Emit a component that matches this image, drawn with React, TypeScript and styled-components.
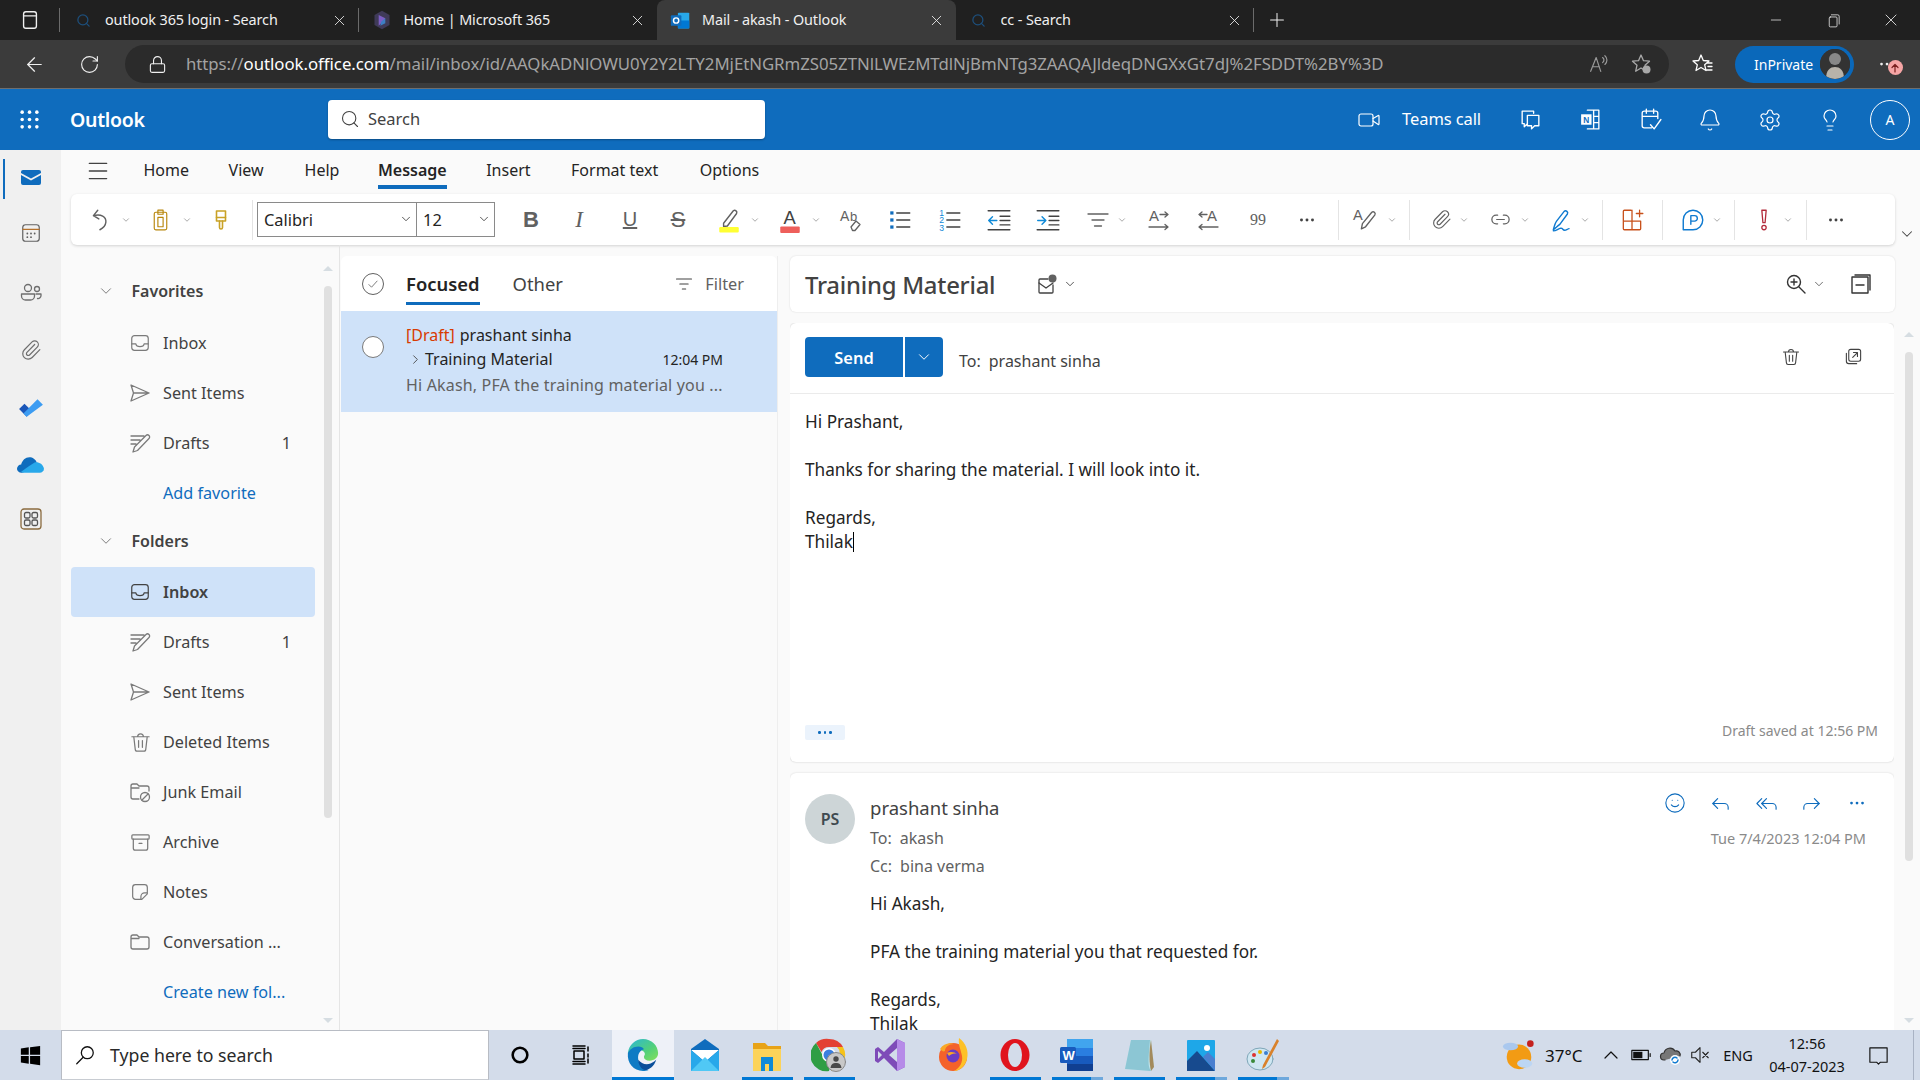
import React from "react";
import styled, { createGlobalStyle } from "styled-components";
import {
  ArrowLeft, Bell, ChevronDown, ChevronRight, ChevronUp, Forward, Lightbulb, Lock, Menu, Minus, Paperclip, Plus,
  Reply, ReplyAll, RotateCw, Search, Settings, Smile, Video, X,
} from "lucide-react";

const UI = `"Noto Sans", "Open Sans", sans-serif`;

const Global = createGlobalStyle`
  html, body { margin: 0; padding: 0; width: 1920px; height: 1080px; overflow: hidden; background: #fafafa; }
  body { font-family: ${UI}; color: #242424; }
  * { box-sizing: border-box; }
`;

const Page = styled.div`display:flex;flex-direction:column;width:1920px;height:1080px;overflow:hidden;`;
const IconSvg = styled.svg<{ $s?: number; $c?: string; $w?: number }>`
  width:${p => p.$s ?? 24}px;height:${p => p.$s ?? 24}px;flex:none;display:block;fill:none;
  stroke:${p => p.$c ?? "currentColor"};stroke-width:${p => p.$w ?? 1.3};stroke-linecap:round;stroke-linejoin:round;
`;
const Ico = ({ s, c, w, children }: { s?: number; c?: string; w?: number; children: React.ReactNode }) => (
  <IconSvg viewBox="0 0 24 24" $s={s} $c={c} $w={w}>{children}</IconSvg>
);

/* ---------- tab strip ---------- */
const TabStrip = styled.div`height:40px;background:#202020;display:flex;align-items:stretch;flex:none;color:#f0f0f0;`;
const SideToggle = styled.div`width:60px;display:flex;align-items:center;justify-content:center;position:relative;
  &::after{content:"";position:absolute;right:0;top:8px;bottom:8px;width:1px;background:#6b6b6b;}`;
const Tab = styled.div<{ $active?: boolean; $sep?: boolean }>`
  width:298.5px;display:flex;align-items:center;padding:0 11px 0 12px;position:relative;font-size:14.4px;letter-spacing:-.1px;
  ${p => p.$active ? "background:#3b3b3b;border-radius:8px 8px 0 0;" : ""}
  ${p => p.$sep ? `&::after{content:"";position:absolute;right:0;top:8px;bottom:8px;width:1px;background:#6b6b6b;}` : ""}
`;
const TabFav = styled.div`width:22px;margin-right:11px;flex:none;display:flex;justify-content:center;`;
const TabTitle = styled.div`flex:1;white-space:nowrap;overflow:hidden;padding-bottom:2px;`;
const NewTab = styled.div`width:46px;display:flex;align-items:center;justify-content:center;`;
const WindowControls = styled.div`margin-left:auto;display:flex;margin-right:0;`;
const WinBtn = styled.div`width:57.5px;display:flex;align-items:center;justify-content:center;`;

/* ---------- address bar ---------- */
const AddressBar = styled.div`height:49px;background:#3b3b3b;border-bottom:1px solid #6e6e6e;display:flex;align-items:center;flex:none;color:#f0f0f0;`;
const NavBtn = styled.div<{ $w: number }>`width:${p => p.$w}px;display:flex;align-items:center;justify-content:center;`;
const UrlPill = styled.div`margin-left:15px;width:1545px;height:38px;border-radius:19px;background:#2b2b2b;display:flex;align-items:center;padding:0 16px 0 23px;`;
const Url = styled.div`margin-left:19px;font-size:16.8px;letter-spacing:-.03px;color:#a3a3a3;white-space:nowrap;flex:1;padding-bottom:2px;overflow:hidden;`;
const UrlHost = styled.span`color:#fff;`;
const PillIcon = styled.div`margin-left:20px;display:flex;color:#a8a8a8;`;
const BarRight = styled.div`display:flex;align-items:center;`;
const FavSlot = styled.div`width:65px;display:flex;justify-content:center;margin-left:1px;`;
const InPrivate = styled.div`width:119px;height:37px;border-radius:19px;background:#0a68ba;display:flex;align-items:center;justify-content:space-between;padding:0 4px 0 19px;font-size:14px;color:#fff;`;
const ProfilePic = styled.div`width:30px;height:30px;border-radius:50%;background:#333;display:flex;align-items:center;justify-content:center;overflow:hidden;`;
const DotsWrap = styled.div`width:66px;display:flex;justify-content:center;position:relative;color:#f0f0f0;font-size:14px;`;
const UpdateBadge = styled.div`position:absolute;left:34px;top:7px;width:15px;height:15px;border-radius:50%;background:#f6a5a5;display:flex;align-items:center;justify-content:center;`;

/* ---------- header ---------- */
const Header = styled.div`height:61px;background:#0f6cbd;display:flex;align-items:center;flex:none;color:#fff;`;
const Waffle = styled.div`width:58px;display:flex;justify-content:center;`;
const Brand = styled.div`width:270px;padding-left:12px;padding-bottom:1px;font-size:19.5px;font-weight:600;letter-spacing:-.3px;`;
const SearchBox = styled.div`width:437px;height:39px;border-radius:4px;background:#fff;box-shadow:0 1px 2px rgba(0,0,0,.3);display:flex;align-items:center;padding:0 0 2px 12px;gap:8px;color:#424242;font-size:16.5px;`;
const HeaderRight = styled.div`margin-left:auto;display:flex;align-items:center;padding-right:10px;`;
const TeamsText = styled.div`margin:0 19px 2px 21px;font-size:16.5px;letter-spacing:-.1px;`;
const HeadSlot = styled.div`width:60px;display:flex;justify-content:center;`;
const MeCircle = styled.div`margin-left:10px;width:40px;height:40px;border-radius:50%;border:1px solid #fff;display:flex;align-items:center;justify-content:center;font-size:14px;`;

/* ---------- body ---------- */
const Body = styled.div`flex:1;display:flex;min-height:0;`;
const Rail = styled.div`width:61px;background:#f0f0f0;display:flex;flex-direction:column;flex:none;`;
const RailSlot = styled.div<{ $h: number; $active?: boolean }>`height:${p => p.$h}px;display:flex;align-items:center;justify-content:center;position:relative;
  ${p => p.$active ? `&::before{content:"";position:absolute;left:3px;top:9px;height:40px;width:2px;background:#0f6cbd;}` : ""}`;
const Main = styled.div`flex:1;display:flex;flex-direction:column;min-width:0;`;
const RibbonTabs = styled.div`height:44px;display:flex;align-items:flex-start;flex:none;`;
const Hamburger = styled.div`width:74px;padding-left:24px;height:42px;display:flex;align-items:center;color:#424242;`;
const RibbonTab = styled.div<{ $active?: boolean; $gap: number }>`
  margin-left:${p => p.$gap}px;height:42px;display:flex;align-items:center;font-size:16px;position:relative;padding-bottom:3px;
  ${p => p.$active ? `font-weight:600;&::after{content:"";position:absolute;left:0;right:0;top:35px;height:4px;background:#0f6cbd;}` : ""}
`;
const ToolCard = styled.div`height:51px;margin-left:10px;width:1824px;background:#fff;border-radius:6px;box-shadow:0 1px 3px rgba(0,0,0,.16);display:flex;align-items:center;flex:none;`;
const RibbonWrap = styled.div`display:flex;flex:none;`;
const Collapse = styled.div`margin-left:3px;width:22px;display:flex;align-items:flex-end;padding-bottom:2px;color:#424242;`;
const Tool = styled.div<{ $gap: number }>`margin-left:${p => p.$gap}px;width:24px;height:24px;flex:none;display:flex;align-items:center;justify-content:center;color:#616161;`;
const Caret = styled.div<{ $gap: number }>`margin-left:${p => p.$gap}px;width:10px;flex:none;display:flex;justify-content:center;color:#616161;`;
const Sep = styled.div<{ $gap: number }>`margin-left:${p => p.$gap}px;width:1px;height:40px;background:#e4e4e4;flex:none;`;
const Combo = styled.div<{ $w: number; $gap?: number }>`margin-left:${p => p.$gap ?? 0}px;width:${p => p.$w}px;height:35px;border:1px solid #8a8a8a;display:flex;align-items:center;justify-content:space-between;padding:0 3px 1px 6px;font-size:16.4px;color:#242424;flex:none;`;
const BoldGlyph = styled.span`font:700 22px "Liberation Sans",sans-serif;color:#616161;`;
const ItalicGlyph = styled.span`font:italic 400 23px "Liberation Serif",serif;color:#616161;`;
const UnderGlyph = styled.span`font:400 20px "Liberation Sans",sans-serif;color:#616161;text-decoration:underline;`;
const StrikeGlyph = styled.span`font:400 22px "Liberation Sans",sans-serif;color:#616161;text-decoration:line-through;`;

const Content = styled.div`flex:1;display:flex;padding-top:11px;min-height:0;`;
const FolderPane = styled.div`width:279px;flex:none;display:flex;border-right:1px solid #e5e5e5;margin-top:-11px;padding-top:11px;`;
const FolderList = styled.div`width:263px;flex:none;padding:13px 0 0 10px;overflow:hidden;`;
const Scroll = styled.div<{ $top: number }>`
  width:8px;flex:none;display:flex;flex-direction:column;align-items:center;padding-top:${p => p.$top}px;position:relative;
  &::before{content:"";flex:none;width:0;height:0;border:5px solid transparent;border-top:0;border-bottom:5px solid #d6dde2;margin-bottom:15.5px;}
  &::after{content:"";position:absolute;bottom:7px;width:0;height:0;border:5px solid transparent;border-bottom:0;border-top:5px solid #d6dde2;}
`;
const Thumb = styled.div<{ $h: number }>`width:8px;height:${p => p.$h}px;border-radius:4px;background:#e0e0e0;flex:none;`;
const Heading = styled.div<{ $first?: boolean }>`height:44px;margin:${p => p.$first ? "0 0 5px" : "1px 0 4px"};display:flex;align-items:center;font-size:16px;font-weight:600;color:#424242;padding-left:25.5px;gap:17px;`;
const Row = styled.div<{ $sel?: boolean; $link?: boolean }>`
  width:244px;height:50px;display:flex;align-items:center;padding:0 24px 0 58px;gap:12px;font-size:16.2px;color:${p => p.$link ? "#0f6cbd" : "#424242"};
  ${p => p.$sel ? "background:#cfe2f9;border-radius:4px;font-weight:600;" : ""}
`;
const RowIcon = styled.div`width:22px;flex:none;color:#7a7a7a;display:flex;justify-content:center;`;
const SelIcon = styled(RowIcon)`color:#424242;`;
const RowText = styled.div<{ $indent?: boolean }>`${p => p.$indent ? "margin-left:34px;" : ""}white-space:nowrap;flex:1;`;
const Count = styled.div`font-weight:400;`;

const ListPane = styled.div`width:437px;flex:none;margin-left:1px;background:#fafafa;border-right:1px solid #eee;`;
const ListHead = styled.div`height:55px;background:#fff;border-radius:6px 6px 0 0;display:flex;align-items:center;position:relative;padding-left:21px;`;
const CheckCircle = styled.div`width:22px;height:22px;border-radius:50%;border:1px solid #616161;display:flex;align-items:center;justify-content:center;color:#616161;`;
const Pivot = styled.div<{ $active?: boolean; $gap: number }>`
  margin-left:${p => p.$gap}px;height:49px;padding-top:6px;display:flex;align-items:center;font-size:18.4px;align-self:flex-start;position:relative;
  ${p => p.$active ? `font-weight:600;color:#242424;&::after{content:"";position:absolute;left:0;right:0;top:46px;height:3px;background:#0f6cbd;}` : "color:#424242;"}
`;
const FilterBtn = styled.div`margin-left:auto;padding-right:33px;display:flex;align-items:center;gap:11px;font-size:16.3px;color:#616161;`;
const MailItem = styled.div`height:101px;background:#cfe2f9;display:flex;`;
const RadioCol = styled.div`width:65px;flex:none;padding:25px 0 0 21px;`;
const Radio = styled.div`width:22px;height:22px;border-radius:50%;border:1.5px solid #7a7a7a;background:#fff;`;
const ItemText = styled.div`width:317px;padding-top:12px;font-size:16px;`;
const ItemLine = styled.div<{ $sub?: boolean }>`height:24px;display:flex;align-items:center;white-space:nowrap;${p => p.$sub ? "margin-top:2px;color:#616161;letter-spacing:.17px;" : ""}`;
const DraftTag = styled.span`color:#d83b01;margin-right:5px;`;
const Expander = styled.span`width:19px;display:flex;justify-content:center;color:#424242;`;
const ItemTime = styled.span`margin-left:auto;font-size:14px;`;

const Reading = styled.div`flex:1;margin-left:12px;min-width:0;display:flex;flex-direction:column;min-height:0;`;
const SubjectCard = styled.div`height:56px;width:1105px;flex:none;background:#fff;border-radius:6px;box-shadow:0 0 2px rgba(0,0,0,.14);display:flex;align-items:center;padding-left:15px;`;
const Subject = styled.div`font-size:23.9px;font-weight:500;color:#424242;letter-spacing:-.25px;padding-top:1px;`;
const SubjectTools = styled.div`margin-left:auto;display:flex;align-items:center;padding-right:22px;gap:0;color:#424242;`;
const Gapped = styled.div<{ $l?: number; $r?: number }>`margin-left:${p => p.$l ?? 0}px;margin-right:${p => p.$r ?? 0}px;display:flex;align-items:center;`;
const ReadArea = styled.div`flex:1;margin-top:11px;display:flex;min-height:0;`;
const CardsCol = styled.div`width:1104px;flex:none;display:flex;flex-direction:column;gap:11px;overflow:hidden;`;
const ScrollGap = styled.div`margin-left:11px;display:flex;align-items:stretch;`;
const ComposeCard = styled.div`height:439px;flex:none;background:#fff;border-radius:6px;box-shadow:0 0 2px rgba(0,0,0,.22);display:flex;flex-direction:column;`;
const ComposeBar = styled.div`height:71px;flex:none;border-bottom:1px solid #ebebeb;display:flex;align-items:center;padding:0 9px 2px 15px;font-size:16px;color:#424242;`;
const SendBtn = styled.div`width:98px;height:40px;background:#0f6cbd;color:#fff;border-radius:4px 0 0 4px;display:flex;align-items:center;justify-content:center;font-size:16.4px;font-weight:600;`;
const SendDrop = styled.div`margin-left:2px;width:38px;height:40px;background:#0f6cbd;color:#fff;border-radius:0 4px 4px 0;display:flex;align-items:center;justify-content:center;`;
const ToLabel = styled.div`margin-left:16px;margin-top:8px;display:flex;gap:8px;`;
const BarIcons = styled.div`margin-left:auto;display:flex;color:#424242;`;
const BarIcon = styled.div`width:63px;display:flex;justify-content:center;`;
const ComposeBody = styled.div`flex:1;padding:16px 15px 0;font-size:17.2px;line-height:24px;color:#242424;`;
const Caretline = styled.span`display:inline-block;width:1px;height:20px;background:#000;vertical-align:-4px;`;
const ComposeFoot = styled.div`display:flex;align-items:center;justify-content:space-between;padding:0 16px 22px 15px;height:37px;flex:none;`;
const MoreChip = styled.div`width:40px;height:15px;border-radius:2px;background:#ebf3fc;color:#0f6cbd;display:flex;align-items:center;justify-content:center;gap:3px;`;
const Dot = styled.i`width:2.5px;height:2.5px;border-radius:50%;background:#0f6cbd;display:block;`;
const SavedAt = styled.div`font-size:14px;line-height:15px;color:#8a8a8a;margin-bottom:5px;`;
const MsgCard = styled.div`flex:1;background:#fff;border-radius:6px 6px 0 0;box-shadow:0 0 2px rgba(0,0,0,.16);padding:21px 14px 0 15px;`;
const MsgHead = styled.div`display:flex;`;
const Avatar = styled.div`width:50px;height:50px;border-radius:50%;background:#cdd5d7;color:#3f4a50;display:flex;align-items:center;justify-content:center;font-size:16px;font-weight:600;flex:none;`;
const Who = styled.div`margin-left:15px;display:flex;flex-direction:column;`;
const WhoName = styled.div`margin-top:2px;height:24px;line-height:24px;font-size:18.5px;color:#424242;`;
const WhoLine = styled.div<{ $first?: boolean }>`height:28px;line-height:28px;font-size:16px;color:#616161;display:flex;gap:8px;${p => p.$first ? "margin-top:4px;" : ""}`;
const WhoRight = styled.div`margin-left:auto;margin-top:-5px;display:flex;flex-direction:column;align-items:flex-end;`;
const Actions = styled.div`display:flex;height:28px;color:#0f6cbd;align-items:center;`;
const ActionBtn = styled.div`width:45.5px;display:flex;justify-content:center;`;
const MsgDate = styled.div`margin:9px 14px 0 0;font-size:14.5px;line-height:24px;color:#8a8a8a;`;
const MsgBody = styled.div`margin:12px 0 0 65px;font-size:17.2px;line-height:24.1px;color:#242424;`;

/* ---------- taskbar ---------- */
const Taskbar = styled.div`height:50px;background:#d3dcea;display:flex;align-items:center;flex:none;`;
const StartBtn = styled.div`width:61px;display:flex;justify-content:center;`;
const TaskSearch = styled.div`width:428px;height:50px;background:#fff;border:1px solid #b8bcc4;border-bottom:1px solid #c8ccd2;display:flex;align-items:center;padding-left:12px;gap:14px;font-size:17.7px;color:#2a2a2a;`;
const TaskSlot = styled.div<{ $w?: number; $on?: boolean; $run?: boolean; $multi?: boolean }>`
  width:${p => p.$w ?? 62}px;height:50px;display:flex;align-items:center;justify-content:center;position:relative;flex:none;
  ${p => p.$on ? "background:#eef1f8;" : ""}
  ${p => p.$run ? `&::after{content:"";position:absolute;bottom:0;height:3px;left:${p.$on ? 0 : 6}px;right:${p.$on ? 0 : 5}px;
     background:${p.$multi ? "linear-gradient(90deg,#0078d4 0 76%,#6ea8dc 76%)" : "#0078d4"};}` : ""}
`;
const Tray = styled.div`margin-left:auto;display:flex;align-items:center;padding-right:6px;height:50px;color:#111;`;
const TraySlot = styled.div<{ $w: number; $l?: number }>`width:${p => p.$w}px;margin-left:${p => p.$l ?? 0}px;display:flex;justify-content:center;align-items:center;flex:none;`;
const Temp = styled.div`font-size:17px;margin-left:6px;width:51px;`;
const Eng = styled.div`font-size:14.5px;`;
const Clock = styled.div`font-size:14.5px;line-height:23px;text-align:center;`;
const ShowDesk = styled.div`width:1px;height:50px;background:#a9b3c4;margin-left:9px;`;

/* ---------- drawings ---------- */
const ThinClose = ({ s = 17 }: { s?: number }) => <X size={s} strokeWidth={1.2} />;
const TabSearchIco = () => <Search size={15} color="#1d4f7c" strokeWidth={2} />;
const Office = () => (
  <IconSvg viewBox="0 0 24 24" $s={20} $w={0}>
    <path d="M12 1 L21 6 V18 L12 23 L3 18 V6Z" fill="#3f3a58" />
    <path d="M8 6 L16 10 L11 16 L8 19Z" fill="#7d5fc5" />
    <path d="M16 10 V16 L10 19 L11 14Z" fill="#3d7fc4" />
  </IconSvg>
);
const OutlookIco = () => (
  <IconSvg viewBox="0 0 24 24" $s={21} $w={0}>
    <rect x="9" y="3" width="13" height="18" rx="1" fill="#28a8ea" />
    <rect x="9" y="12" width="13" height="9" fill="#0078d4" />
    <rect x="1" y="6" width="12" height="12" rx="1" fill="#0f6cbd" />
    <circle cx="7" cy="12" r="3" fill="none" stroke="#fff" strokeWidth="1.7" />
  </IconSvg>
);
const InboxI = ({ c }: { c?: string }) => <Ico s={22} c={c}><rect x="3" y="4" width="18" height="16" rx="3" /><path d="M3 13h4.500c.3 2 2 3 4.500 3s4.200-1 4.500-3H21" /></Ico>;
const SentI = () => <Ico s={24}><path d="M3 4l18 8-18 8 2.500-8zM5.500 12H21" /></Ico>;
const DraftI = () => <Ico s={24}><path d="M3 5h13M3 9h9M3 13h5M5 21l1.500-5L18 4.500a2.100 2.100 0 013 3L9.500 19.500z" /></Ico>;
const TrashI = ({ s = 23 }: { s?: number }) => <Ico s={s}><path d="M3 6h18M9 6a3 3 0 016 0M5 6l1.500 13a2 2 0 002 2h7a2 2 0 002-2L19 6M10 10v7M14 10v7" /></Ico>;
const JunkI = () => <Ico s={24}><path d="M11 19H5a2 2 0 01-2-2V6a2 2 0 012-2h4l2 2h8a2 2 0 012 2v3M3 8h8" /><circle cx="17" cy="17" r="4.500" /><path d="M14 20l6-6" /></Ico>;
const ArchiveI = () => <Ico s={23}><rect x="3" y="4" width="18" height="4.500" rx="1" /><path d="M4.500 8.500V18a2 2 0 002 2h11a2 2 0 002-2V8.500M10.500 13h3" /></Ico>;
const NoteI = () => <Ico s={22}><path d="M14 20H7a3 3 0 01-3-3V7a3 3 0 013-3h10a3 3 0 013 3v7zM20 13h-3a4 4 0 00-4 4v3" /></Ico>;
const FolderI = () => <Ico s={24}><path d="M3 7a2 2 0 012-2h4l2 2h8a2 2 0 012 2v8a2 2 0 01-2 2H5a2 2 0 01-2-2zM3 8.500h8" /></Ico>;
const DownC = ({ s = 14, c }: { s?: number; c?: string }) => <ChevronDown size={s} strokeWidth={1.3} color={c} />;

const Mono = `"Liberation Sans",sans-serif`;
const T = styled.text<{ $f?: number; $b?: boolean; $serif?: boolean }>`font-family:${p => p.$serif ? `"Liberation Serif",serif` : Mono};font-size:${p => p.$f ?? 10}px;stroke:none;font-weight:${p => p.$b ? 700 : 400};`;

const RT = {
  undo: <Ico s={26}><path d="M9 3L5 8l5 3M5 8c7-2 12 1 11.500 6-.3 3-2.500 5.500-5.500 7" /></Ico>,
  paste: <Ico s={25} c="#b8860b" w={1.1}><rect x="6" y="5" width="12" height="17" rx="1.500" /><rect x="9.500" y="3" width="5" height="4" /><rect x="9.500" y="10" width="5" height="9" /></Ico>,
  brush: <Ico s={24} c="#c9a227" w={1.6}><rect x="7.500" y="3" width="9" height="10" /><path d="M7.500 9.500h9M10.500 13v6.500a1.500 1.500 0 003 0V13" /></Ico>,
  highlight: <IconSvg viewBox="0 0 24 24" $s={26}><path d="M7 15L16 3.500a2 2 0 013 2.500L10.500 17.500 7 18z" stroke="#616161" /><rect x="3" y="18.500" width="18" height="5" rx="1" fill="#ffff33" stroke="none" /></IconSvg>,
  color: <IconSvg viewBox="0 0 24 24" $s={26}><T x="6" y="15.500" $f={17} fill="#424242">A</T><rect x="3" y="18" width="18" height="6" rx="1" fill="#ee5f5b" stroke="none" /></IconSvg>,
  clear: <IconSvg viewBox="0 0 24 24" $s={24}><T x="1" y="13" $f={14} fill="#616161">A</T><T x="11" y="13" $f={13} fill="#616161">b</T><path d="M12 19l5-6 4 3.500-5 6h-2.500z" stroke="#616161" /></IconSvg>,
  bullets: <Ico s={26} c="#424242"><path d="M9 5.500h12M9 12h12M9 18.500h12" /><rect x="3" y="4" width="3" height="3" fill="#0f6cbd" stroke="none" /><rect x="3" y="10.500" width="3" height="3" fill="#0f6cbd" stroke="none" /><rect x="3" y="17" width="3" height="3" fill="#0f6cbd" stroke="none" /></Ico>,
  numbers: <IconSvg viewBox="0 0 24 24" $s={26} $c="#424242"><path d="M10 5.500h12M10 12h12M10 18.500h12" /><T x="3" y="8" $f={8} fill="#0f8ad8">1</T><T x="3" y="15" $f={8} fill="#0f8ad8">2</T><T x="3" y="22" $f={8} fill="#0f8ad8">3</T></IconSvg>,
  outdent: <IconSvg viewBox="0 0 24 24" $s={26} $c="#424242"><path d="M2 3.500h20M13 8.500h9M13 12.500h9M13 16.500h9M2 21h20" /><path d="M10 12.500H2.500M6 9l-3.500 3.500L6 16" stroke="#0f8ad8" /></IconSvg>,
  indent: <IconSvg viewBox="0 0 24 24" $s={26} $c="#424242"><path d="M2 3.500h20M13 8.500h9M13 12.500h9M13 16.500h9M2 21h20" /><path d="M2.500 12.500H10M6.500 9l3.500 3.500L6.500 16" stroke="#0f8ad8" /></IconSvg>,
  align: <Ico s={24}><path d="M2 6h20M6 12h12M8.500 18h7" /></Ico>,
  ltr: <IconSvg viewBox="0 0 24 24" $s={24} $c="#616161"><T x="2" y="13" $f={15} fill="#616161">A</T><path d="M13 6.500h8M18 4l3 2.500L18 9M2 19h19M18 16.500l3 2.500-3 2.500" /></IconSvg>,
  rtl: <IconSvg viewBox="0 0 24 24" $s={24} $c="#616161"><T x="11" y="13" $f={15} fill="#616161">A</T><path d="M11 6.500H3M6 4L3 6.500 6 9M3 19h19M6 16.500L3 19l3 2.500" /></IconSvg>,
  quote: <IconSvg viewBox="0 0 24 24" $s={24}><T x="4" y="17" $f={16} $serif fill="#616161">99</T></IconSvg>,
  dots: <IconSvg viewBox="0 0 24 24" $s={22} $w={0}><circle cx="6" cy="12" r="1.600" fill="#424242" /><circle cx="12" cy="12" r="1.600" fill="#424242" /><circle cx="18" cy="12" r="1.600" fill="#424242" /></IconSvg>,
  styles: <IconSvg viewBox="0 0 24 24" $s={25} $c="#616161"><T x="1" y="12" $f={14} fill="#616161">A</T><path d="M9 21l1-5L19 5a2 2 0 013 2.500L13 19z" /></IconSvg>,
  attach: <Paperclip size={21} strokeWidth={1.3} color="#616161" />,
  link: <Ico s={23}><path d="M9 7.500H7.500a4.500 4.500 0 000 9H9M15 7.500h1.500a4.500 4.500 0 010 9H15M8 12h8" /></Ico>,
  sign: <Ico s={26} c="#0f7ad0"><path d="M4 21c1-4 1.500-6 3-8l7-9a2 2 0 013 2.500l-7 9.500c-2 1.500-4 3.500-6 5zM4 22c3 0 4-2 7-2.500 2 0 1.500 2 3.500 2 1.500 0 2-1 4-1.500" /></Ico>,
  table: <Ico s={26} c="#c8501a" w={1.2}><path d="M11 3H5a1 1 0 00-1 1v16a1 1 0 001 1h14a1 1 0 001-1v-7H4M12 3v18M16 6h6M19 3v6" /></Ico>,
  poll: <IconSvg viewBox="0 0 24 24" $s={26} $c="#0f7ad0"><path d="M3 21v-9a9 9 0 119 9z" /><path d="M10 16V8h3.500a2.500 2.500 0 010 5H10" /></IconSvg>,
  important: <Ico s={26} c="#b22a3a" w={1.2}><path d="M10 3h4l-1 11.500h-2z" /><circle cx="12" cy="19" r="2" /></Ico>,
};

const Caretd = ({ g }: { g: number }) => <Caret $gap={g}><DownC /></Caret>;

const CardIcon = () => <Ico s={24} c="#424242"><path d="M13 7H5a1 1 0 00-1 1v12a1 1 0 001 1h12a1 1 0 001-1v-7" /><path d="M4 11l7 5 7-5" /><circle cx="17.500" cy="6.500" r="4" fill="#616161" stroke="none" /></Ico>;

/* taskbar art */
const App16 = ({ children, s = 36 }: { children: React.ReactNode; s?: number }) => <IconSvg viewBox="0 0 36 36" $s={s} $w={0}>{children}</IconSvg>;
const TbEdge = () => (
  <App16 s={34}>
    <defs><linearGradient id="eg" x1="0" y1="0" x2="1" y2="1"><stop offset="0" stopColor="#2bb6d8" /><stop offset=".6" stopColor="#52d07a" /><stop offset="1" stopColor="#86e05a" /></linearGradient></defs>
    <path d="M2 16C3 7 10 1 18 1c9 0 16 7 16 15 0 5-4 8-9 8-4 0-6-2-6-4 0-1 1-2 1-3 0-3-4-5-8-4-5 1-8 3-10 3z" fill="url(#eg)" />
    <path d="M2 16c2-4 6-7 11-7 3 0 5 1 6 3-4 1-7 5-6 11 1 5 5 10 11 11-2 1-4 1-6 1C8 35 1 27 2 16z" fill="#0f7bc4" />
    <path d="M13 23c3 4 8 6 13 4 2-1 4-2 6-4-2 7-8 11-12 11-4-1-7-6-7-11z" fill="#0a4f9a" />
  </App16>
);
const TbMail = () => (
  <App16><path d="M4 12L18 2l14 10v22H4z" fill="#0f6cbd" /><path d="M4 13h28L18 25z" fill="#fff" /><path d="M4 13v21h28V13L18 25z" fill="#28a8ea" /><path d="M4 34l14-14 14 14z" fill="#50c8f5" /></App16>
);
const TbFolder = () => (
  <App16><path d="M4 6h12l3 3h13v6H4z" fill="#e8a317" /><path d="M4 12h28v22H4z" fill="#fcd35a" /><rect x="12" y="20" width="12" height="14" fill="#0f8ad8" /><rect x="16" y="27" width="4" height="7" fill="#fcd35a" /></App16>
);
const TbChrome = () => (
  <App16>
    <path d="M18 2a16 16 0 0114 8H18a8 8 0 00-7.500 5L5 6a16 16 0 0113-4z" fill="#e34133" />
    <path d="M32 10a16 16 0 01-12 24l6-12a8 8 0 000-12z" fill="#f6c218" />
    <path d="M5 6l7 13a8 8 0 008 7l-2 8A16 16 0 015 6z" fill="#2f9e44" />
    <circle cx="18" cy="18" r="7" fill="#fff" /><circle cx="18" cy="18" r="5.500" fill="#3a7fe0" />
    <circle cx="25" cy="25" r="9.500" fill="#c8c8c8" stroke="#888" strokeWidth="1" /><circle cx="25" cy="22" r="2.700" fill="#4a4a4a" /><path d="M19.500 31c.5-4 2.500-5 5.500-5s5 1 5.500 5z" fill="#4a4a4a" />
  </App16>
);
const TbVS = () => (
  <App16>
    <path d="M24 2l8 4v24l-8 4-13-13-6 5-3-2V12l3-2 6 5z" fill="#7e4bb8" />
    <path d="M24 2l8 4v24l-8 4z" fill="#b68be8" />
    <path d="M24 11l-8 7 8 7zM5 14v8l4-4z" fill="#d3dcea" />
  </App16>
);
const TbFirefox = () => (
  <App16>
    <circle cx="18" cy="20" r="14" fill="#f4622a" />
    <path d="M24 1c7 5 10 13 8 21-2 8-8 12-13 12 6-3 9-9 8-15-1-6-4-11-3-18z" fill="#fdc127" />
    <path d="M5 12c3-5 9-7 14-5-5 0-9 3-9 7-2 1-3 0-5-2z" fill="#f9a825" />
    <circle cx="18" cy="19" r="6.500" fill="#6a3cc4" /><path d="M12 16c3-2 8-1 10 1-3-1-6 0-8 2z" fill="#f9a825" />
  </App16>
);
const TbOpera = () => (
  <App16><ellipse cx="18" cy="18" rx="14.500" ry="16" fill="#e0141d" /><ellipse cx="18" cy="18" rx="7" ry="12" fill="#d3dcea" /></App16>
);
const TbWord = () => (
  <App16>
    <rect x="8" y="2" width="26" height="32" rx="1.500" fill="#2a7ee0" /><rect x="8" y="2" width="26" height="9" fill="#41a5ee" /><rect x="8" y="19" width="26" height="8" fill="#185abd" /><rect x="8" y="27" width="26" height="7" fill="#103f91" />
    <rect x="1" y="10" width="16" height="16" rx="1.500" fill="#185abd" /><T x="3.500" y="23" $f={13} $b fill="#fff">W</T>
  </App16>
);
const TbNote = () => (
  <App16><path d="M10 3h20l3 27-3 4-26-2z" fill="#bfe3ea" /><path d="M10 3L4 32l26 2c-3-5-3-8-1-31z" fill="#8cc6d4" /><path d="M30 3l3 27-3 4c-2-8-2-21 0-31z" fill="#a38a5c" /></App16>
);
const TbPhotos = () => (
  <App16><rect x="4" y="3" width="28" height="31" rx="1" fill="#1ea7e8" /><circle cx="24" cy="11" r="3" fill="#fff" /><path d="M4 34V24l10-10 18 20z" fill="#174a8e" /><path d="M20 20l5-5 7 7v12z" fill="#4a7fd0" /></App16>
);
const TbPaint = () => (
  <App16>
    <ellipse cx="15" cy="22" rx="13" ry="11" fill="#cfe7f2" stroke="#7fa6b8" strokeWidth="1" />
    <circle cx="9" cy="18" r="2" fill="#d33" /><circle cx="15" cy="15" r="2" fill="#e6b800" /><circle cx="8" cy="24" r="2" fill="#3a8a3a" /><circle cx="21" cy="16" r="2" fill="#3a7fd0" />
    <path d="M32 2l2 2-14 26-3 2 1-4z" fill="#d9822b" />
  </App16>
);
const WeatherIco = () => (
  <App16 s={34}>
    <circle cx="18" cy="20" r="13" fill="#f29b14" /><circle cx="30" cy="6" r="3.500" fill="#c4211e" />
    <ellipse cx="9" cy="9" rx="8" ry="4" fill="#aac8ee" /><ellipse cx="24" cy="27" rx="8" ry="4.500" fill="#bcd6f4" />
  </App16>
);

const folderRows1 = [
  { t: "Inbox", i: <InboxI /> }, { t: "Sent Items", i: <SentI /> }, { t: "Drafts", i: <DraftI />, n: 1 },
];
const folderRows2 = [
  { t: "Drafts", i: <DraftI />, n: 1 }, { t: "Sent Items", i: <SentI /> }, { t: "Deleted Items", i: <TrashI /> }, { t: "Junk Email", i: <JunkI /> },
  { t: "Archive", i: <ArchiveI /> }, { t: "Notes", i: <NoteI /> }, { t: "Conversation ...", i: <FolderI /> },
];
const ribbonTabs = [
  { t: "Home", g: 8.5 }, { t: "View", g: 39.5 }, { t: "Help", g: 41 }, { t: "Message", g: 38.5, a: true }, { t: "Insert", g: 39.5 }, { t: "Format text", g: 40.5 }, { t: "Options", g: 41.5 },
];

export default function App() {
  return (
    <Page>
      <Global />
      <TabStrip>
        <SideToggle><Ico s={22} c="#f0f0f0" w={1.5}><rect x="5" y="3" width="14" height="18" rx="2.500" /><path d="M5 7.500h14" /></Ico></SideToggle>
        <Tab $sep><TabFav><TabSearchIco /></TabFav><TabTitle>outlook 365 login - Search</TabTitle><ThinClose /></Tab>
        <Tab><TabFav><Office /></TabFav><TabTitle>Home | Microsoft 365</TabTitle><ThinClose /></Tab>
        <Tab $active><TabFav><OutlookIco /></TabFav><TabTitle>Mail - akash - Outlook</TabTitle><ThinClose /></Tab>
        <Tab $sep><TabFav><TabSearchIco /></TabFav><TabTitle>cc - Search</TabTitle><ThinClose /></Tab>
        <NewTab><Plus size={22} strokeWidth={1.1} /></NewTab>
        <WindowControls>
          <WinBtn><Minus size={16} strokeWidth={1.1} /></WinBtn>
          <WinBtn><Ico s={17} w={1.1}><rect x="6" y="7" width="11" height="14" rx="1.500" /><path d="M9 4h9a2 2 0 012 2v11" /></Ico></WinBtn>
          <WinBtn><X size={20} strokeWidth={1} /></WinBtn>
        </WindowControls>
      </TabStrip>

      <AddressBar>
        <NavBtn $w={70}><ArrowLeft size={23} strokeWidth={1.3} /></NavBtn>
        <NavBtn $w={40}><RotateCw size={21} strokeWidth={1.3} /></NavBtn>
        <UrlPill>
          <Lock size={19} strokeWidth={1.4} color="#f0f0f0" />
          <Url>https://<UrlHost>outlook.office.com</UrlHost>/mail/inbox/id/AAQkADNlOWU0Y2Y2LTY2MjEtNGRmZS05ZTNlLWEzMTdlNjBmNTg3ZAAQAJldeqDNGXxGt7dJ%2FSDDT%2BY%3D</Url>
          <PillIcon><Ico s={22} c="#9a9a9a"><path d="M4 20L10 5l5 15M6.500 15h7M17 5c2 1.500 2 4 0 5.500M19.500 3c3 2.500 3 7 0 9.500" /></Ico></PillIcon>
          <PillIcon><Ico s={24} c="#a8a8a8"><path d="M12 3l2.500 5.700 6 .5-4.500 4 1.300 6-5.300-3.200L6.700 19.200 8 13.200l-4.500-4 6-.5z" /><circle cx="17.500" cy="17.500" r="4" fill="#a8a8a8" stroke="none" /></Ico></PillIcon>
        </UrlPill>
        <BarRight>
          <FavSlot><Ico s={24} c="#fff"><path d="M11 3l2.300 5.500 5.700.5-4.300 3.800 1.300 5.700-5-3-5 3 1.300-5.700L3 9l5.700-.5zM17 11h5M18 14.500h4M17 18h5" /></Ico></FavSlot>
          <InPrivate>InPrivate
            <ProfilePic><IconSvg viewBox="0 0 30 30" $s={30} $w={0}><rect width="30" height="30" fill="#333" /><circle cx="15" cy="10" r="6" fill="#888" /><path d="M6 30c0-9 4-12 9-12s9 3 9 12z" fill="#b8b3aa" /></IconSvg></ProfilePic>
          </InPrivate>
          <DotsWrap>
            <IconSvg viewBox="0 0 24 24" $s={22} $w={0}><circle cx="6" cy="12" r="1.500" fill="#eee" /><circle cx="12" cy="12" r="1.500" fill="#eee" /><circle cx="18" cy="12" r="1.500" fill="#eee" /></IconSvg>
            <UpdateBadge><Ico s={12} c="#7a1f1f" w={2.4}><path d="M12 20V5M6 11l6-6 6 6" /></Ico></UpdateBadge>
          </DotsWrap>
        </BarRight>
      </AddressBar>

      <Header>
        <Waffle>
          <IconSvg viewBox="0 0 20 20" $s={21} $w={0}>
            {[3, 10, 17].flatMap(y => [3, 10, 17].map(x => <circle key={`${x}${y}`} cx={x} cy={y} r="1.700" fill="#fff" />))}
          </IconSvg>
        </Waffle>
        <Brand>Outlook</Brand>
        <SearchBox><Search size={20} strokeWidth={1.3} color="#424242" />Search</SearchBox>
        <HeaderRight>
          <Video size={24} strokeWidth={1.2} />
          <TeamsText>Teams call</TeamsText>
          <HeadSlot><Ico s={25}><path d="M15 6V4H4v12h2v3l3-3M9 8h11v10h-4l-3 3v-3H9z" /></Ico></HeadSlot>
          <HeadSlot><IconSvg viewBox="0 0 24 24" $s={25}><path d="M9 3h11v18H9M15 3v18M15 9h5M15 15h5" /><rect x="3" y="7" width="10" height="10" fill="#fff" stroke="none" /><T x="5" y="15.500" $f={8} $b fill="#0f6cbd">N</T></IconSvg></HeadSlot>
          <HeadSlot><Ico s={25}><path d="M13 20H6a2 2 0 01-2-2V6a2 2 0 012-2h11a2 2 0 012 2v5M8 2v4M15 2v4M4 9h15M12 17l3.500 4L22 12" /></Ico></HeadSlot>
          <HeadSlot><Bell size={24} strokeWidth={1.2} /></HeadSlot>
          <HeadSlot><Settings size={24} strokeWidth={1.2} /></HeadSlot>
          <HeadSlot><Lightbulb size={24} strokeWidth={1.2} /></HeadSlot>
          <MeCircle>A</MeCircle>
        </HeaderRight>
      </Header>

      <Body>
        <Rail>
          <RailSlot $h={53} $active>
            <IconSvg viewBox="0 0 24 24" $s={24} $w={0}><path d="M2 7a2 2 0 012-2h16a2 2 0 012 2v1l-10 5.500L2 8z" fill="#0f6cbd" /><path d="M2 10l10 5.500L22 10v8a2 2 0 01-2 2H4a2 2 0 01-2-2z" fill="#0f6cbd" /></IconSvg>
          </RailSlot>
          <RailSlot $h={60}><Ico s={22} c="#616161"><rect x="3" y="3" width="18" height="18" rx="3" /><path d="M3 8h18" stroke="#b5722d" /><path d="M8 12.500h.01M12 12.500h.01M16 12.500h.01M8 16.500h.01M12 16.500h.01" strokeWidth="2" /></Ico></RailSlot>
          <RailSlot $h={58}><Ico s={24} c="#6e6e6e"><circle cx="9" cy="8" r="3.500" /><circle cx="18" cy="9" r="2.500" /><path d="M2.500 14h13v2a4 4 0 01-4 4h-5a4 4 0 01-4-4zM17 14h5v1.500a3 3 0 01-3.500 3" /></Ico></RailSlot>
          <RailSlot $h={58}><Paperclip size={22} strokeWidth={1.3} color="#6e6e6e" /></RailSlot>
          <RailSlot $h={57}><IconSvg viewBox="0 0 24 24" $s={26} $w={0}><path d="M1 13l5-5 7 7-5 5z" fill="#1b56b8" /><path d="M8 20l-3-3L18 4l5 5z" fill="#3c9cf2" /></IconSvg></RailSlot>
          <RailSlot $h={56}><IconSvg viewBox="0 0 26 18" $s={27} $w={0}><path d="M10 15L5 17c-3 0-5-2-5-4s2-4 4-4c1-4 4-7 8-7 3 0 6 2 7 5z" fill="#0f6cbd" /><path d="M7 17c-2 0-3-1-3-1l7-5 6-4c3-1 8 1 9 6 0 2-2 4-4 4z" fill="#28a8ea" /></IconSvg></RailSlot>
          <RailSlot $h={54}><Ico s={24} c="#555" w={1.3}><rect x="2" y="2" width="20" height="20" rx="3" stroke="#8a6b3f" /><rect x="5.500" y="5.500" width="5.500" height="5.500" rx="1.500" /><rect x="13" y="5.500" width="5.500" height="5.500" rx="1.500" /><rect x="5.500" y="13" width="5.500" height="5.500" rx="1.500" /><rect x="13" y="13" width="5.500" height="5.500" rx="1.500" /></Ico></RailSlot>
        </Rail>

        <Main>
          <RibbonTabs>
            <Hamburger><Menu size={26} strokeWidth={1.2} /></Hamburger>
            {ribbonTabs.map(r => <RibbonTab key={r.t} $gap={r.g} $active={r.a}>{r.t}</RibbonTab>)}
          </RibbonTabs>
          <RibbonWrap>
            <ToolCard>
              <Tool $gap={18}>{RT.undo}</Tool><Caretd g={8} />
              <Tool $gap={17}>{RT.paste}</Tool><Caretd g={10} />
              <Tool $gap={17}>{RT.brush}</Tool><Sep $gap={19} />
              <Combo $w={160} $gap={4}>Calibri<DownC /></Combo>
              <Combo $w={79} $gap={-1}>12<DownC /></Combo>
              <Tool $gap={24}><BoldGlyph>B</BoldGlyph></Tool>
              <Tool $gap={24}><ItalicGlyph>I</ItalicGlyph></Tool>
              <Tool $gap={27}><UnderGlyph>U</UnderGlyph></Tool>
              <Tool $gap={24}><StrikeGlyph>S</StrikeGlyph></Tool>
              <Tool $gap={27}>{RT.highlight}</Tool><Caretd g={9} />
              <Tool $gap={18}>{RT.color}</Tool><Caretd g={9} />
              <Tool $gap={18}>{RT.clear}</Tool>
              <Tool $gap={25}>{RT.bullets}</Tool>
              <Tool $gap={25}>{RT.numbers}</Tool>
              <Tool $gap={26}>{RT.outdent}</Tool>
              <Tool $gap={25}>{RT.indent}</Tool>
              <Tool $gap={26}>{RT.align}</Tool><Caretd g={7} />
              <Tool $gap={20}>{RT.ltr}</Tool>
              <Tool $gap={25}>{RT.rtl}</Tool>
              <Tool $gap={26}>{RT.quote}</Tool>
              <Tool $gap={25}>{RT.dots}</Tool><Sep $gap={19} />
              <Tool $gap={13}>{RT.styles}</Tool><Caretd g={11} /><Sep $gap={12} />
              <Tool $gap={19}>{RT.attach}</Tool><Caretd g={6} />
              <Tool $gap={19}>{RT.link}</Tool><Caretd g={8} />
              <Tool $gap={20}>{RT.sign}</Tool><Caretd g={6} /><Sep $gap={12} />
              <Tool $gap={17}>{RT.table}</Tool><Sep $gap={18} />
              <Tool $gap={18}>{RT.poll}</Tool><Caretd g={7} /><Sep $gap={12} />
              <Tool $gap={17}>{RT.important}</Tool><Caretd g={7} /><Sep $gap={13} />
              <Tool $gap={17}>{RT.dots}</Tool>
            </ToolCard>
            <Collapse><ChevronDown size={18} strokeWidth={1.4} /></Collapse>
          </RibbonWrap>

          <Content>
            <FolderPane>
              <FolderList>
                <Heading $first><DownC s={18} c="#7a7a7a" />Favorites</Heading>
                {folderRows1.map(r => (
                  <Row key={r.t}><RowIcon>{r.i}</RowIcon><RowText>{r.t}</RowText>{r.n ? <Count>{r.n}</Count> : null}</Row>
                ))}
                <Row $link><RowText $indent>Add favorite</RowText></Row>
                <Heading><DownC s={18} c="#7a7a7a" />Folders</Heading>
                <Row $sel><SelIcon><InboxI /></SelIcon><RowText>Inbox</RowText></Row>
                {folderRows2.map(r => (
                  <Row key={r.t}><RowIcon>{r.i}</RowIcon><RowText>{r.t}</RowText>{r.n ? <Count>{r.n}</Count> : null}</Row>
                ))}
                <Row $link><RowText $indent>Create new fol...</RowText></Row>
              </FolderList>
              <Scroll $top={9.5}><Thumb $h={532} /></Scroll>
            </FolderPane>

            <ListPane>
              <ListHead>
                <CheckCircle><Ico s={14} w={1.4}><path d="M5 13l4.500 4.500L19 7" /></Ico></CheckCircle>
                <Pivot $active $gap={22}>Focused</Pivot>
                <Pivot $gap={33}>Other</Pivot>
                <FilterBtn><Ico s={20} c="#424242"><path d="M3 6h18M7 12h10M10 18h4" /></Ico>Filter</FilterBtn>
              </ListHead>
              <MailItem>
                <RadioCol><Radio /></RadioCol>
                <ItemText>
                  <ItemLine><DraftTag>[Draft]</DraftTag>prashant sinha</ItemLine>
                  <ItemLine><Expander><ChevronRight size={15} strokeWidth={1.4} /></Expander>Training Material<ItemTime>12:04 PM</ItemTime></ItemLine>
                  <ItemLine $sub>Hi Akash, PFA the training material you ...</ItemLine>
                </ItemText>
              </MailItem>
            </ListPane>

            <Reading>
              <SubjectCard>
                <Subject>Training Material</Subject>
                <Gapped $l={40}><CardIcon /></Gapped>
                <Gapped $l={4}><DownC /></Gapped>
                <SubjectTools>
                  <Ico s={24} c="#333" w={1.4}><circle cx="10" cy="10" r="6.500" /><path d="M15 15l6 6M7 10h6M10 7v6" /></Ico>
                  <Gapped $l={4} $r={23}><DownC /></Gapped>
                  <Ico s={24} c="#333" w={1.4}><rect x="3" y="5" width="16" height="16" /><path d="M7 13h8M6 3h15v15" /></Ico>
                </SubjectTools>
              </SubjectCard>
              <ReadArea>
                <CardsCol>
                  <ComposeCard>
                    <ComposeBar>
                      <SendBtn>Send</SendBtn>
                      <SendDrop><ChevronDown size={18} strokeWidth={1.3} /></SendDrop>
                      <ToLabel><span>To:</span><span>prashant sinha</span></ToLabel>
                      <BarIcons>
                        <BarIcon><TrashI s={20} /></BarIcon>
                        <BarIcon><Ico s={19} w={1.4}><rect x="6" y="3" width="15" height="15" rx="2.500" /><path d="M3 8v10a3 3 0 003 3h10M11 13l6-6M12 7h5v5" /></Ico></BarIcon>
                      </BarIcons>
                    </ComposeBar>
                    <ComposeBody>
                      Hi Prashant,<br /><br />
                      Thanks for sharing the material. I will look into it.<br /><br />
                      Regards,<br />
                      Thilak<Caretline />
                    </ComposeBody>
                    <ComposeFoot>
                      <MoreChip><Dot /><Dot /><Dot /></MoreChip>
                      <SavedAt>Draft saved at 12:56 PM</SavedAt>
                    </ComposeFoot>
                  </ComposeCard>
                  <MsgCard>
                    <MsgHead>
                      <Avatar>PS</Avatar>
                      <Who>
                        <WhoName>prashant sinha</WhoName>
                        <WhoLine $first><span>To:</span><span>akash</span></WhoLine>
                        <WhoLine><span>Cc:</span><span>bina verma</span></WhoLine>
                      </Who>
                      <WhoRight>
                        <Actions>
                          <ActionBtn><Smile size={22} strokeWidth={1.2} /></ActionBtn>
                          <ActionBtn><Reply size={23} strokeWidth={1.2} /></ActionBtn>
                          <ActionBtn><ReplyAll size={23} strokeWidth={1.2} /></ActionBtn>
                          <ActionBtn><Forward size={23} strokeWidth={1.2} /></ActionBtn>
                          <ActionBtn><IconSvg viewBox="0 0 24 24" $s={22} $w={0}><circle cx="6" cy="12" r="1.500" fill="#0f6cbd" /><circle cx="12" cy="12" r="1.500" fill="#0f6cbd" /><circle cx="18" cy="12" r="1.500" fill="#0f6cbd" /></IconSvg></ActionBtn>
                        </Actions>
                        <MsgDate>Tue 7/4/2023 12:04 PM</MsgDate>
                      </WhoRight>
                    </MsgHead>
                    <MsgBody>
                      Hi Akash,<br /><br />
                      PFA the training material you that requested for.<br /><br />
                      Regards,<br />
                      Thilak
                    </MsgBody>
                  </MsgCard>
                </CardsCol>
                <ScrollGap><Scroll $top={8.5}><Thumb $h={509} /></Scroll></ScrollGap>
              </ReadArea>
            </Reading>
          </Content>
        </Main>
      </Body>

      <Taskbar>
        <StartBtn><IconSvg viewBox="0 0 24 24" $s={21} $w={0}><path d="M1 4l9-1.300V11H1zM11.500 2.500L23 1v10H11.500zM1 12.500h9v8.800L1 20zM11.500 12.500H23V23l-11.500-1.600z" fill="#000" /></IconSvg></StartBtn>
        <TaskSearch>
          <IconSvg viewBox="0 0 24 24" $s={22} $c="#111" $w={1.4}><circle cx="14.500" cy="9.500" r="6.500" /><path d="M10 14.500L3 21.500" /></IconSvg>
          Type here to search
        </TaskSearch>
        <TaskSlot $w={61}><IconSvg viewBox="0 0 24 24" $s={22} $c="#000" $w={2.8}><circle cx="12" cy="12" r="8" /></IconSvg></TaskSlot>
        <TaskSlot $w={62}><Ico s={24} c="#000" w={1.5}><rect x="5" y="8" width="10" height="8" /><path d="M4 3h12M4 5.500h12M4 18.500h12M4 21h12M19 4v4M19 11v3M19 16v4" /></Ico></TaskSlot>
        <TaskSlot $on $run><TbEdge /></TaskSlot>
        <TaskSlot><TbMail /></TaskSlot>
        <TaskSlot $run><TbFolder /></TaskSlot>
        <TaskSlot $run><TbChrome /></TaskSlot>
        <TaskSlot><TbVS /></TaskSlot>
        <TaskSlot><TbFirefox /></TaskSlot>
        <TaskSlot $run><TbOpera /></TaskSlot>
        <TaskSlot $run $multi><TbWord /></TaskSlot>
        <TaskSlot $run><TbNote /></TaskSlot>
        <TaskSlot $run $multi><TbPhotos /></TaskSlot>
        <TaskSlot $run $multi><TbPaint /></TaskSlot>
        <Tray>
          <TraySlot $w={40}><WeatherIco /></TraySlot>
          <Temp>37°C</Temp>
          <TraySlot $w={30}><ChevronUp size={24} strokeWidth={1.2} /></TraySlot>
          <TraySlot $w={30}><IconSvg viewBox="0 0 24 24" $s={22} $c="#111" $w={1.3}><rect x="2" y="7" width="18" height="10" /><rect x="3.500" y="8.500" width="10" height="7" fill="#111" stroke="none" /><path d="M22 10.500v3" /></IconSvg></TraySlot>
          <TraySlot $w={30}><IconSvg viewBox="0 0 24 24" $s={24} $w={1.2} $c="#333"><path d="M6 17H5a3 3 0 010-7 6 6 0 0111-2 4 4 0 015 5" fill="#777" /><circle cx="16" cy="17" r="5" fill="#fff" stroke="none" /><path d="M13 17a3 3 0 015-2M19 17a3 3 0 01-5 2" stroke="#0f7ad0" strokeWidth="1.500" /></IconSvg></TraySlot>
          <TraySlot $w={28}><Ico s={22} c="#222" w={1.2}><path d="M3 9h4l5-5v16l-5-5H3zM15 9l6 6M21 9l-6 6" /></Ico></TraySlot>
          <TraySlot $w={48}><Eng>ENG</Eng></TraySlot>
          <TraySlot $w={84} $l={3}><Clock>12:56<br />04-07-2023</Clock></TraySlot>
          <TraySlot $w={52} $l={3}><Ico s={23} c="#111" w={1.2}><path d="M3 4h18v15h-7l-2 2-2-2H3z" /></Ico></TraySlot>
          <ShowDesk />
        </Tray>
      </Taskbar>
    </Page>
  );
}
